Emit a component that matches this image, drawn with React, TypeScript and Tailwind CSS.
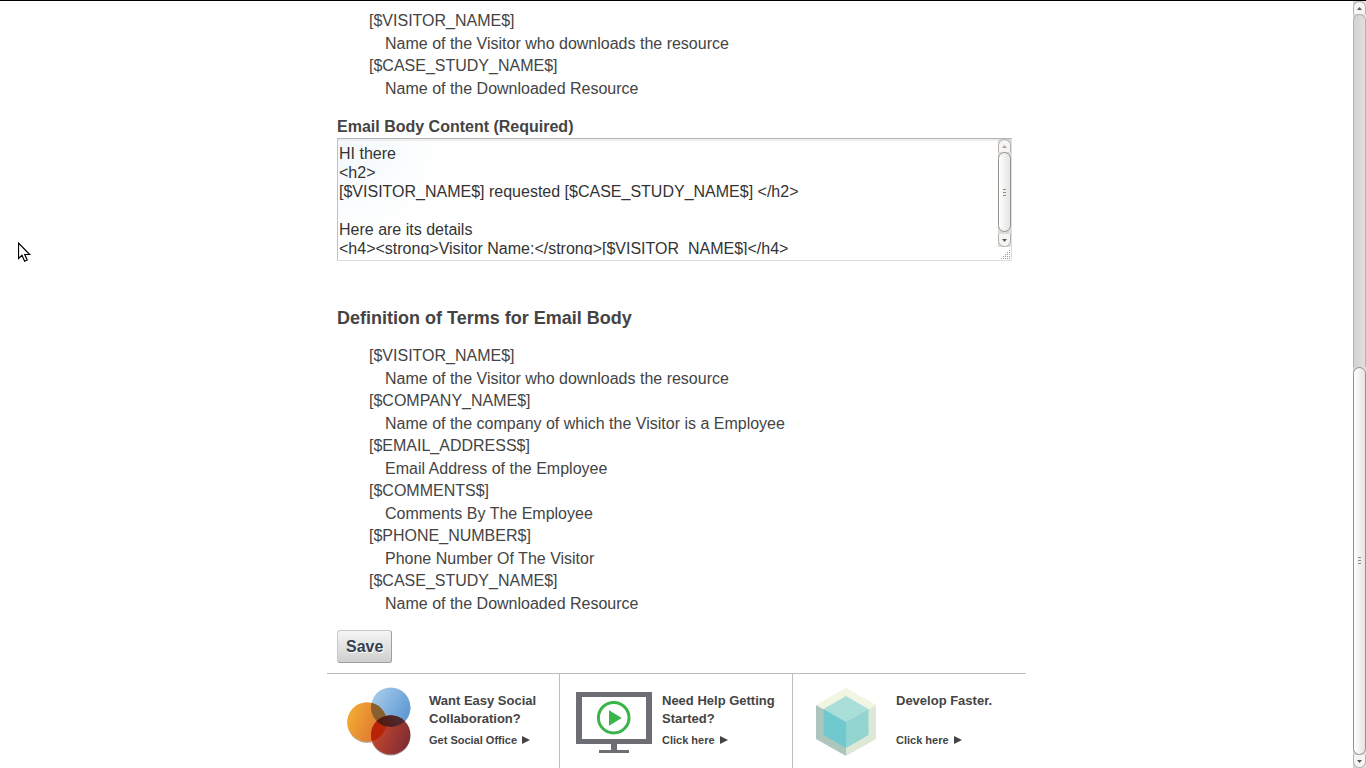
import { ReactNode } from "react";

type Term = { name: string; description: string };

const subjectTerms: Term[] = [
  { name: "[$VISITOR_NAME$]", description: "Name of the Visitor who downloads the resource" },
  { name: "[$CASE_STUDY_NAME$]", description: "Name of the Downloaded Resource" },
];

const bodyTerms: Term[] = [
  { name: "[$VISITOR_NAME$]", description: "Name of the Visitor who downloads the resource" },
  { name: "[$COMPANY_NAME$]", description: "Name of the company of which the Visitor is a Employee" },
  { name: "[$EMAIL_ADDRESS$]", description: "Email Address of the Employee" },
  { name: "[$COMMENTS$]", description: "Comments By The Employee" },
  { name: "[$PHONE_NUMBER$]", description: "Phone Number Of The Visitor" },
  { name: "[$CASE_STUDY_NAME$]", description: "Name of the Downloaded Resource" },
];

const emailBody = `HI there
<h2>
[$VISITOR_NAME$] requested [$CASE_STUDY_NAME$] </h2>

Here are its details
<h4><strong>Visitor Name:</strong>[$VISITOR_NAME$]</h4>`;

function TermList({ terms }: { terms: Term[] }) {
  return (
    <dl className="pl-8">
      {terms.map((term) => (
        <div key={term.name}>
          <dt className="leading-[22px]">{term.name}</dt>
          <dd className="pl-4 leading-[23px]">{term.description}</dd>
        </div>
      ))}
    </dl>
  );
}

function ArrowButton({ up, muted, label }: { up?: boolean; muted?: boolean; label: string }) {
  return (
    <button
      type="button"
      aria-label={label}
      className={`flex h-[13px] w-full shrink-0 items-center justify-center border border-[#b5b2ae] bg-[#f6f5f4] ${
        up ? "rounded-t-full border-b-0" : "rounded-b-full border-t-0"
      }`}
    >
      <svg width="5" height="3" viewBox="0 0 5 3" fill={muted ? "#a9a6a2" : "#5c5955"}>
        <path d={up ? "M0 3 2.5 0 5 3z" : "M0 0 2.5 3 5 0z"} />
      </svg>
    </button>
  );
}

function Thumb({ className }: { className: string }) {
  return (
    <div
      className={`flex flex-col items-center justify-center gap-0.5 rounded-full border border-[#96928d] bg-linear-to-r from-white to-[#e6e4e2] ${className}`}
    >
      <span className="h-px w-[3px] bg-[#8f8c88]" />
      <span className="h-px w-[3px] bg-[#8f8c88]" />
      <span className="h-px w-[3px] bg-[#8f8c88]" />
    </div>
  );
}

function SocialIcon() {
  return (
    <svg width="102" height="94" viewBox="0 0 102 94" className="shrink-0" aria-hidden="true">
      <defs>
        <linearGradient id="blue" x1="0" y1="0.2" x2="1" y2="0.8">
          <stop offset="0" stopColor="#a9cdea" />
          <stop offset="1" stopColor="#5794d3" />
        </linearGradient>
        <linearGradient id="orange" x1="0" y1="0.3" x2="1" y2="0.7">
          <stop offset="0" stopColor="#f3ac30" />
          <stop offset="1" stopColor="#dc6b35" />
        </linearGradient>
        <linearGradient id="red" x1="0" y1="0.3" x2="1" y2="0.7">
          <stop offset="0" stopColor="#cf4a2e" />
          <stop offset="1" stopColor="#7c2b31" />
        </linearGradient>
        <linearGradient id="dusk" x1="0" y1="0" x2="1" y2="0">
          <stop offset="0" stopColor="#551508" />
          <stop offset="1" stopColor="#4a3038" />
        </linearGradient>
        <clipPath id="inOrange">
          <circle cx="40" cy="48" r="19.7" />
        </clipPath>
        <clipPath id="inRed">
          <circle cx="63.7" cy="60.9" r="19.7" />
        </clipPath>
        <filter id="soft" x="-20%" y="-20%" width="140%" height="140%">
          <feDropShadow dx="0" dy="1" stdDeviation="0.7" floodColor="#000" floodOpacity="0.4" />
        </filter>
      </defs>
      <g filter="url(#soft)">
        <circle cx="63.7" cy="33.3" r="19.7" fill="url(#blue)" />
        <circle cx="40" cy="48" r="19.7" fill="url(#orange)" />
        <circle cx="63.7" cy="60.9" r="19.7" fill="url(#red)" />
      </g>
      <g clipPath="url(#inOrange)">
        <circle cx="63.7" cy="33.3" r="19.7" fill="#86602f" />
        <circle cx="63.7" cy="60.9" r="19.7" fill="#b92406" />
      </g>
      <g clipPath="url(#inRed)">
        <circle cx="63.7" cy="33.3" r="19.7" fill="url(#dusk)" />
      </g>
    </svg>
  );
}

function VideoIcon() {
  return (
    <svg width="102" height="94" viewBox="0 0 102 94" className="shrink-0" aria-hidden="true">
      <path
        fill="#6d6e73"
        fillRule="evenodd"
        d="M16 18h76v52H57v6h12v3H39v-3h12v-6H16zM22 23v42h64V23z"
      />
      <circle cx="53.7" cy="43.7" r="15.3" fill="none" stroke="#39b54a" strokeWidth="3" />
      <path fill="#39b54a" d="M49 36.3 61.8 44 49 51.8z" />
    </svg>
  );
}

function CubeIcon() {
  return (
    <svg width="103" height="94" viewBox="0 0 103 94" className="shrink-0" aria-hidden="true">
      <path fill="#f1f5e1" d="M53 14 83 31 53 48 23 31z" />
      <path fill="#adc6bd" d="M23 31 53 48V82L23 65z" />
      <path fill="#dde8d6" d="M83 31 53 48V82L83 65z" />
      <path fill="#aaded8" d="M53 22 75.5 35 53 48 30.5 35z" />
      <path fill="#70c9cf" d="M30.5 35 53 48V74L30.5 61z" />
      <path fill="#92d4d0" d="M75.5 35 53 48V74L75.5 61z" />
    </svg>
  );
}

function Promo({ icon, title, link, last }: { icon: ReactNode; title: string; link: string; last?: boolean }) {
  return (
    <section className={`flex items-start ${last ? "" : "border-r border-[#bdbdbd]"}`}>
      {icon}
      <div className="flex-1 pt-[18px] font-bold">
        <h3 className="min-h-9 max-w-[124px] text-[13px] leading-[18px]">{title}</h3>
        <a href="#" className="mt-1 flex items-center gap-[5px] text-[11px] leading-4">
          {link}
          <svg width="8" height="8" viewBox="0 0 8 8" fill="currentColor" aria-hidden="true">
            <path d="M0 0 8 4 0 8z" />
          </svg>
        </a>
      </div>
    </section>
  );
}

export default function App() {
  return (
    <div className="relative flex min-h-screen border-t border-black bg-white font-['Liberation_Sans',Arial,sans-serif] text-base text-[#444]">
      <main className="flex flex-1 flex-col items-center">
        <form className="w-full max-w-[699px] pt-[9px] pr-3.5 pl-2.5" onSubmit={(event) => event.preventDefault()}>
          <TermList terms={subjectTerms} />

          <label htmlFor="email-body" className="mt-4 block leading-[22px] font-bold">
            Email Body Content (Required)
          </label>
          <div className="flex border border-[#dcdddd] border-t-[#b2b5b5] border-l-[#c0c2c2] bg-[radial-gradient(ellipse_110px_110px_at_top_left,#f3f8fb,#ffffff)] shadow-[inset_0_2px_1px_#eeeeee]">
            <textarea
              id="email-body"
              rows={6}
              defaultValue={emailBody}
              className="my-[5px] block h-[111px] flex-1 resize-none overflow-hidden bg-transparent px-px leading-[19px] text-[#333] outline-none"
            />
            <div className="flex w-[13px] flex-col">
              <div className="flex flex-1 flex-col bg-[#dddbd9]">
                <ArrowButton up muted label="Scroll text up" />
                <Thumb className="mb-0.5 flex-1" />
                <ArrowButton label="Scroll text down" />
              </div>
              <svg width="13" height="13" viewBox="0 0 13 13" fill="#999" aria-hidden="true">
                <path d="M11 3h1v1h-1zM9 5h1v1H9zM11 5h1v1h-1zM7 7h1v1H7zM9 7h1v1H9zM11 7h1v1h-1zM5 9h1v1H5zM7 9h1v1H7zM9 9h1v1H9zM11 9h1v1h-1zM3 11h1v1H3zM5 11h1v1H5zM7 11h1v1H7zM9 11h1v1H9zM11 11h1v1h-1z" />
              </svg>
            </div>
          </div>

          <h2 className="mt-[46px] mb-4 text-lg leading-[22px] font-bold">
            Definition of Terms for Email Body
          </h2>
          <TermList terms={bodyTerms} />

          <button
            type="submit"
            className="mt-[15px] block rounded-[3px] border border-[#c8c9ca] border-r-[#9e9e9e] border-b-[#9e9e9e] bg-linear-to-b from-[#f5f5f5] to-[#cfcfcf] px-2 py-1 leading-[23px] font-bold text-[#34404f] [text-shadow:1px_1px_#fff]"
          >
            Save
          </button>
        </form>

        <footer className="mt-2.5 grid w-full max-w-[699px] flex-1 grid-cols-3 border-t border-[#bdbdbd]">
          <Promo icon={<SocialIcon />} title="Want Easy Social Collaboration?" link="Get Social Office" />
          <Promo icon={<VideoIcon />} title="Need Help Getting Started?" link="Click here" />
          <Promo icon={<CubeIcon />} title="Develop Faster." link="Click here" last />
        </footer>
      </main>

      <div className="flex w-[13px] shrink-0 flex-col bg-linear-to-r from-[#d3d1cf] to-[#e3e1df]">
        <ArrowButton up label="Scroll page up" />
        <div className="flex-[353] rounded-t-full border-x border-t border-[#b5b2ae]" />
        <Thumb className="flex-[388]" />
        <ArrowButton label="Scroll page down" />
      </div>

      <svg
        width="13"
        height="21"
        viewBox="0 0 13 21"
        className="pointer-events-none absolute top-[241px] left-[18px]"
        aria-hidden="true"
      >
        <path
          d="M.5 1v15.5l3.5-3.3 2.6 6 2.6-1.2-2.5-5.5h5z"
          fill="#fff"
          stroke="#000"
          strokeWidth="1.2"
        />
      </svg>
    </div>
  );
}
